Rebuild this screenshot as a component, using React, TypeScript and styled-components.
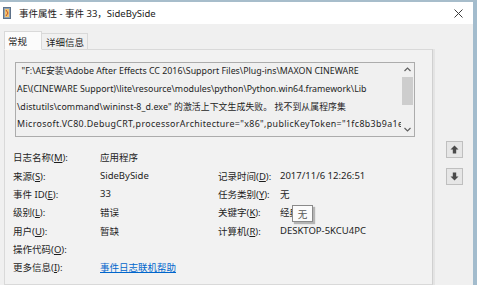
import React from "react";
import styled, { createGlobalStyle } from "styled-components";

const GlobalStyle = createGlobalStyle`
  html, body {
    margin: 0;
    padding: 0;
    background: #f0f0f0;
  }
  body {
    font-family: "Noto Sans", "Noto Sans CJK SC", sans-serif;
    font-size: 9.5px;
    color: #1e1e1e;
  }
`;

const Window = styled.div`
  width: 473px;
  height: 283px;
  display: flex;
  flex-direction: column;
  border-top: 2px solid #a7bdcb;
  border-right: 4px solid #a3bccd;
  overflow: hidden;
`;

const TitleBar = styled.div`
  height: 22px;
  flex: none;
  background: #ffffff;
  display: flex;
  align-items: center;
  padding: 0 7px 0 3px;
`;

const TitleText = styled.span`
  margin-left: 8px;
  font-size: 9.5px;
  color: #1a1a1a;
`;

const CloseButton = styled.div`
  margin-left: auto;
  width: 16px;
  height: 16px;
  display: flex;
  align-items: center;
  justify-content: center;
`;

const Body = styled.div`
  flex: 1;
  display: flex;
  background: #f0f0f0;
`;

const TabColumn = styled.div`
  width: 429px;
  margin-left: 4px;
  padding-top: 7px;
  display: flex;
  flex-direction: column;
`;

const TabStrip = styled.div`
  height: 19px;
  display: flex;
  align-items: flex-end;
  position: relative;
  z-index: 1;
  margin-bottom: -1px;
`;

const Tab = styled.div<{ $active?: boolean }>`
  height: ${(p) => (p.$active ? 19 : 17)}px;
  padding: 0 ${(p) => (p.$active ? 14 : 3)}px 0 ${(p) => (p.$active ? 3 : 4)}px;
  display: flex;
  align-items: center;
  box-sizing: border-box;
  border: 1px solid #d9d9d9;
  border-bottom: ${(p) => (p.$active ? "1px solid #fbfbfb" : "1px solid #d9d9d9")};
  border-left: ${(p) => (p.$active ? "1px solid #d9d9d9" : "none")};
  background: ${(p) => (p.$active ? "#fbfbfb" : "#f0f0f0")};
  font-size: 9.5px;
`;

const Panel = styled.div`
  flex: 1;
  border: 1px solid #d9d9d9;
  border-right: 1px solid #d0d0d0;
  box-shadow: 2px 0 0 #e4e4e4;
  background: #f2f2f2;
  padding: 12px 0 0 10px;
  box-sizing: border-box;
`;

const MessageBox = styled.div`
  width: 400px;
  height: 75px;
  box-sizing: border-box;
  border: 1px solid #acacac;
  background: #f0f0f0;
  display: flex;
`;

const MessageText = styled.div`
  flex: 1;
  overflow: hidden;
  white-space: nowrap;
  line-height: 17.8px;
  padding: 0 0 0 1px;
  font-size: 8.85px;
  color: #1e1e1e;
`;

const MessageLine = styled.div<{ $spacing?: number }>`
  letter-spacing: ${(p) => p.$spacing ?? 0}px;
`;

const ScrollBar = styled.div`
  width: 13px;
  display: flex;
  flex-direction: column;
  align-items: center;
  background: #f0f0f0;
`;

const ScrollArrow = styled.div`
  height: 13px;
  width: 13px;
  display: flex;
  align-items: center;
  justify-content: center;
`;

const ScrollTrack = styled.div`
  flex: 1;
  width: 11px;
  padding: 1px 0 18px;
  box-sizing: border-box;
  display: flex;
`;

const ScrollThumb = styled.div`
  flex: 1;
  background: #cdcdcd;
`;

const Fields = styled.div`
  margin-top: 11px;
  margin-left: -2px;
  display: grid;
  grid-template-columns: 87px 118px 62px 1fr;
  grid-auto-rows: 18.35px;
  align-items: center;
  font-size: 9.5px;
`;

const Label = styled.span`
  color: #1e1e1e;
  white-space: nowrap;
`;

const Value = styled.span`
  color: #1e1e1e;
  white-space: nowrap;
  position: relative;
`;

const Link = styled.a`
  color: #0066cc;
  text-decoration: underline;
  white-space: nowrap;
`;

const Tip = styled.span`
  position: absolute;
  left: 12px;
  top: 0;
  width: 21px;
  height: 17px;
  box-sizing: border-box;
  background: #fbfbfb;
  border: 1px solid #8a8a8a;
  box-shadow: 2px 2px 1px rgba(0, 0, 0, 0.25);
  color: #575757;
  display: flex;
  align-items: center;
  justify-content: center;
`;

const SideButtons = styled.div`
  padding: 117px 0 0 13px;
  display: flex;
  flex-direction: column;
  gap: 10px;
`;

const ArrowButton = styled.div`
  width: 17px;
  height: 17px;
  box-sizing: border-box;
  border: 1px solid #bfbfbf;
  background: #e6e6e6;
  display: flex;
  align-items: center;
  justify-content: center;
`;

const lines: { text: string; spacing?: number }[] = [
  { text: String.raw`  "F:\AE安装\Adobe After Effects CC 2016\Support Files\Plug-ins\MAXON CINEWARE` },
  { text: String.raw`AE\(CINEWARE Support)\lite\resource\modules\python\Python.win64.framework\Lib` },
  { text: String.raw`\distutils\command\wininst-8_d.exe" 的激活上下文生成失败。 找不到从属程序集`, spacing: 0.08 },
  {
    text: String.raw`Microsoft.VC80.DebugCRT,processorArchitecture="x86",publicKeyToken="1fc8b3b9a1e18e3b",type="win32"`,
    spacing: 0.36,
  },
];

const Mn = ({ text, k }: { text: string; k: string }) => (
  <Label>
    {text}(<u>{k}</u>):
  </Label>
);

const AppIcon = () => (
  <svg width="8" height="12" viewBox="0 0 8 12">
    <rect x="0.5" y="0.5" width="7" height="11" fill="#8ea3b8" stroke="#5d7189" />
    <rect x="2" y="2" width="4" height="8" fill="#f4c26b" />
    <path d="M3 3 L5 6 L3 9" stroke="#c0512b" strokeWidth="1" fill="none" />
  </svg>
);

const UpArrow = () => (
  <svg width="9" height="9" viewBox="0 0 9 9">
    <path d="M4.5 0.5 L8.5 4.5 H6.2 V8.5 H2.8 V4.5 H0.5 Z" fill="#4a4a4a" />
  </svg>
);

const DownArrow = () => (
  <svg width="9" height="9" viewBox="0 0 9 9">
    <path d="M4.5 8.5 L8.5 4.5 H6.2 V0.5 H2.8 V4.5 H0.5 Z" fill="#4a4a4a" />
  </svg>
);

export default function App() {
  return (
    <>
      <GlobalStyle />
      <Window>
        <TitleBar>
          <AppIcon />
          <TitleText>事件属性 - 事件 33，SideBySide</TitleText>
          <CloseButton>
            <svg width="9" height="9" viewBox="0 0 9 9">
              <path d="M0.5 0.5 L8.5 8.5 M8.5 0.5 L0.5 8.5" stroke="#3a3a3a" strokeWidth="1" />
            </svg>
          </CloseButton>
        </TitleBar>
        <Body>
          <TabColumn>
            <TabStrip>
              <Tab $active>常规</Tab>
              <Tab>详细信息</Tab>
            </TabStrip>
            <Panel>
              <MessageBox>
                <MessageText>
                  {lines.map((l, i) => (
                    <MessageLine key={i} $spacing={l.spacing}>
                      {l.text.replace(/ /g, "\u00a0")}
                    </MessageLine>
                  ))}
                </MessageText>
                <ScrollBar>
                  <ScrollArrow>
                    <svg width="7" height="5" viewBox="0 0 7 5">
                      <path d="M0.5 4 L3.5 1 L6.5 4" stroke="#606060" strokeWidth="1.2" fill="none" />
                    </svg>
                  </ScrollArrow>
                  <ScrollTrack>
                    <ScrollThumb />
                  </ScrollTrack>
                  <ScrollArrow>
                    <svg width="7" height="5" viewBox="0 0 7 5">
                      <path d="M0.5 1 L3.5 4 L6.5 1" stroke="#606060" strokeWidth="1.2" fill="none" />
                    </svg>
                  </ScrollArrow>
                </ScrollBar>
              </MessageBox>
              <Fields>
                <Mn text="日志名称" k="M" />
                <Value>应用程序</Value>
                <span />
                <span />

                <Mn text="来源" k="S" />
                <Value>SideBySide</Value>
                <Mn text="记录时间" k="D" />
                <Value>2017/11/6 12:26:51</Value>

                <Mn text="事件 ID" k="E" />
                <Value>33</Value>
                <Mn text="任务类别" k="Y" />
                <Value>无</Value>

                <Mn text="级别" k="L" />
                <Value>错误</Value>
                <Mn text="关键字" k="K" />
                <Value>
                  经典
                  <Tip>无</Tip>
                </Value>

                <Mn text="用户" k="U" />
                <Value>暂缺</Value>
                <Mn text="计算机" k="R" />
                <Value>DESKTOP-5KCU4PC</Value>

                <Mn text="操作代码" k="O" />
                <span />
                <span />
                <span />

                <Mn text="更多信息" k="I" />
                <Link href="#">事件日志联机帮助</Link>
              </Fields>
            </Panel>
          </TabColumn>
          <SideButtons>
            <ArrowButton>
              <UpArrow />
            </ArrowButton>
            <ArrowButton>
              <DownArrow />
            </ArrowButton>
          </SideButtons>
        </Body>
      </Window>
    </>
  );
}
